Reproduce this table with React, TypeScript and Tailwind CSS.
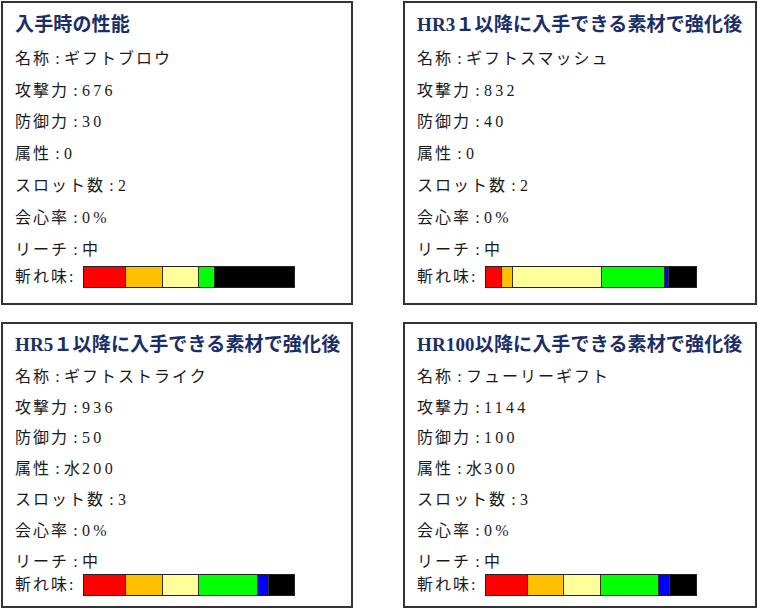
type Seg = { color: string; w: number };

interface Weapon {
  title: string;
  name: string;
  attack: string;
  defense: string;
  element: string;
  slots: string;
  affinity: string;
  reach: string;
  sharpness: Seg[];
}

const RED = "bg-[#ff0000]";
const ORANGE = "bg-[#ffc000]";
const YELLOW = "bg-[#ffff99]";
const GREEN = "bg-[#00ff00]";
const BLUE = "bg-[#0000ff]";
const BLACK = "bg-[#000000]";

const weapons: Weapon[] = [
  {
    title: "入手時の性能",
    name: "ギフトブロウ",
    attack: "676",
    defense: "30",
    element: "0",
    slots: "2",
    affinity: "0%",
    reach: "中",
    sharpness: [
      { color: RED, w: 42 },
      { color: ORANGE, w: 37 },
      { color: YELLOW, w: 36 },
      { color: GREEN, w: 16 },
      { color: BLACK, w: 81 },
    ],
  },
  {
    title: "HR3１以降に入手できる素材で強化後",
    name: "ギフトスマッシュ",
    attack: "832",
    defense: "40",
    element: "0",
    slots: "2",
    affinity: "0%",
    reach: "中",
    sharpness: [
      { color: RED, w: 16 },
      { color: ORANGE, w: 11 },
      { color: YELLOW, w: 89 },
      { color: GREEN, w: 63 },
      { color: BLUE, w: 4 },
      { color: BLACK, w: 29 },
    ],
  },
  {
    title: "HR5１以降に入手できる素材で強化後",
    name: "ギフトストライク",
    attack: "936",
    defense: "50",
    element: "水200",
    slots: "3",
    affinity: "0%",
    reach: "中",
    sharpness: [
      { color: RED, w: 42 },
      { color: ORANGE, w: 37 },
      { color: YELLOW, w: 36 },
      { color: GREEN, w: 59 },
      { color: BLUE, w: 11 },
      { color: BLACK, w: 27 },
    ],
  },
  {
    title: "HR100以降に入手できる素材で強化後",
    name: "フューリーギフト",
    attack: "1144",
    defense: "100",
    element: "水300",
    slots: "3",
    affinity: "0%",
    reach: "中",
    sharpness: [
      { color: RED, w: 42 },
      { color: ORANGE, w: 36 },
      { color: YELLOW, w: 37 },
      { color: GREEN, w: 58 },
      { color: BLUE, w: 11 },
      { color: BLACK, w: 28 },
    ],
  },
];

// half-width digits are spaced wider than the kana in the original
function Value({ text }: { text: string }) {
  const parts = text.split(/([0-9%]+)/).filter(Boolean);
  return (
    <>
      {parts.map((p, i) =>
        /^[0-9%]+$/.test(p) ? (
          <span key={i} className="tracking-[3.3px]">
            {p}
          </span>
        ) : (
          <span key={i}>{p}</span>
        )
      )}
    </>
  );
}

function Colon() {
  return <span className="inline-block w-[13px] text-center tracking-normal">:</span>;
}

function Sharpness({ segs }: { segs: Seg[] }) {
  return (
    <div className="flex h-[22px] w-[212px] border border-[#222]">
      {segs.map((s, i) => {
        const last = i === segs.length - 1;
        return (
          <div
            key={i}
            className={`${s.color} h-full ${last ? "flex-1" : "shrink-0 border-r border-[#333]"}`}
            style={last ? undefined : { width: s.w }}
          />
        );
      })}
    </div>
  );
}

function WeaponCard({ weapon, top }: { weapon: Weapon; top: boolean }) {
  const rows: [string, string][] = [
    ["名称", weapon.name],
    ["攻撃力", weapon.attack],
    ["防御力", weapon.defense],
    ["属性", weapon.element],
    ["スロット数", weapon.slots],
    ["会心率", weapon.affinity],
    ["リーチ", weapon.reach],
  ];

  return (
    <div
      className={`border-2 border-[#333] bg-white pl-[12px] ${
        top ? "h-[304px] pt-[10px]" : "h-[286px] pt-[9px]"
      }`}
    >
      <h3 className="text-[19px] font-bold leading-[24px] tracking-[0.15px] text-[#1a2e68]">
        {weapon.title}
      </h3>
      <div className={top ? "mt-[6px]" : "mt-[4.5px]"}>
        {rows.map(([label, value]) => (
          <div
            key={label}
            className={`flex items-center whitespace-pre text-[16px] tracking-[2px] text-[#1a1a1a] ${
              top ? "h-[31.8px]" : "h-[30.8px]"
            }`}
          >
            <span>{label}</span>
            <Colon />
            <Value text={value} />
          </div>
        ))}
        <div
          className={`flex h-[22px] items-center text-[16px] tracking-[2px] text-[#1a1a1a] ${
            top ? "" : "mt-[-3px]"
          }`}
        >
          <span className="w-[68px] shrink-0">
            斬れ味<span className="tracking-normal">:</span>
          </span>
          <Sharpness segs={weapon.sharpness} />
        </div>
      </div>
    </div>
  );
}

export default function App() {
  return (
    <div
      className="h-[608px] w-[758px] overflow-hidden bg-white pl-[1px] pt-[1px]"
      style={{ fontFamily: '"Liberation Serif", "Noto Sans CJK JP", serif' }}
    >
      <div className="grid grid-cols-[352px_354px] gap-x-[50px] gap-y-[17px]">
        {weapons.map((w, i) => (
          <WeaponCard key={w.title} weapon={w} top={i < 2} />
        ))}
      </div>
    </div>
  );
}
